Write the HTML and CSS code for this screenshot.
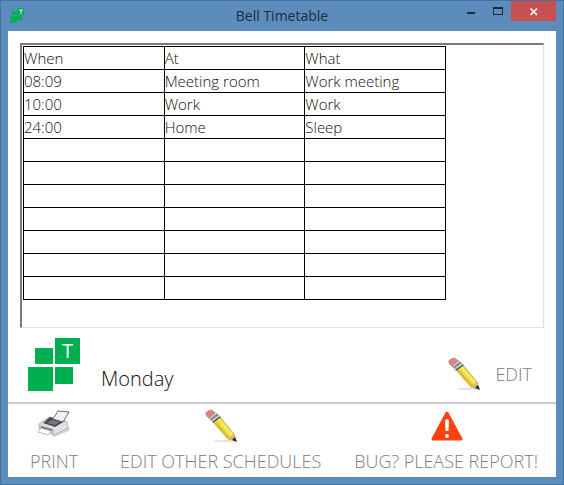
FILE: index.html
```
<!DOCTYPE html>
<html lang="en">
<head>
    <meta charset="UTF-8">
    <meta name="viewport" content="width=device-width, initial-scale=1.0">
    <title>Bell Timetable</title>
    <link rel="stylesheet" href="styles.css">
</head>
<body>
    <!-- Shared icons -->
    <svg class="defs" width="0" height="0" aria-hidden="true">
        <symbol id="pencil" viewBox="0 0 34 34">
            <ellipse cx="20" cy="32" rx="10" ry="1" fill="#e2e2e6"/>
            <path d="M9 13 16 8 30 25 32 32 24 30Z" fill="#f2dc3c" stroke="#b8a244" stroke-width=".8"/>
            <path d="M11 13 25 29" stroke="#d9bd2e" stroke-width="2"/>
            <path d="M14 10 28 26" stroke="#f8ea70" stroke-width="2"/>
            <path d="M24 30 30 25 32 32Z" fill="#d8b27a"/>
            <path d="M28 31 31 28 33 33Z" fill="#33281e"/>
            <path d="M4 8 11 3 17 8 9 14Z" fill="#8a8a8c"/>
            <path d="M6 9 12 4M8 12 15 7" stroke="#e8e8e8" stroke-width="1.4"/>
            <path d="M9 13 16 8" stroke="#555" stroke-width="1.2"/>
            <path d="M2 6Q1 3 4 2L7 1Q9 1 11 4L5 9Q3 8 2 6Z" fill="#dc8578" stroke="#c0766a" stroke-width=".6"/>
        </symbol>
        <symbol id="logo" viewBox="0 0 52 53">
            <path d="M27 0h25v26H27zM7 10h18v16H7zM0 29h25v24H0zM27 29h18v17H27z" fill="#00b050"/>
        </symbol>
    </svg>

    <div class="window">
        <header class="titlebar">
            <span class="app-icon"><svg width="14" height="15" viewBox="0 0 14 15"><use href="#logo" width="14" height="15"/><path d="M9 2h4M11 2v4" stroke="#d5f2e0" stroke-width="1"/></svg></span>
            <h1>Bell Timetable</h1>
            <div class="controls">
                <button type="button" aria-label="Minimize"><svg width="10" height="10"><path d="M1 6h8v2H1z" fill="#1b2b3c"/></svg></button>
                <button type="button" aria-label="Maximize"><svg width="10" height="10"><path d="M0 1h10v8H0zM1 3v5h8V3z" fill="#1b2b3c" fill-rule="evenodd"/></svg></button>
                <button type="button" class="close" aria-label="Close"><svg width="10" height="10"><path d="M1.500 2.500 8 9M8 2.500 1.500 9" stroke="#fff" stroke-width="1.600"/></svg></button>
            </div>
        </header>

        <main class="content">
            <div class="sheet">
                <table>
                    <thead>
                        <tr><th>When</th><th>At</th><th>What</th></tr>
                    </thead>
                    <tbody>
                        <tr><td>08:09</td><td>Meeting room</td><td>Work meeting</td></tr>
                        <tr><td>10:00</td><td>Work</td><td>Work</td></tr>
                        <tr><td>24:00</td><td>Home</td><td>Sleep</td></tr>
                        <tr><td></td><td></td><td></td></tr>
                        <tr><td></td><td></td><td></td></tr>
                        <tr><td></td><td></td><td></td></tr>
                        <tr><td></td><td></td><td></td></tr>
                        <tr><td></td><td></td><td></td></tr>
                        <tr><td></td><td></td><td></td></tr>
                        <tr><td></td><td></td><td></td></tr>
                    </tbody>
                </table>
            </div>

            <div class="day-bar">
                <div class="logo">
                    <svg width="52" height="53"><use href="#logo"/></svg>
                    <span>T</span>
                </div>
                <h2>Monday</h2>
                <button type="button" class="action edit">
                    <svg width="34" height="34"><use href="#pencil"/></svg>
                    <span>EDIT</span>
                </button>
            </div>

            <footer class="toolbar">
                <button type="button" class="action print">
                    <svg width="34" height="34" viewBox="0 0 34 34">
                        <path d="M2 22 15 27 33 18 32 22 17 28Z" fill="#d4d4d6"/>
                        <path d="M2 15 12 8 30 13 31 19 17 26 2 20Z" fill="#e2e2e4" stroke="#a5a5a8" stroke-width=".8"/>
                        <path d="M2 15 17 20 17 26 2 20Z" fill="#c4c4c7"/>
                        <path d="M6 14 13 8 28 12 18 18Z" fill="#4a4b50"/>
                        <path d="M10 14 15 11 23 13 18 16Z" fill="#77797f"/>
                        <path d="M16 10 21 2 32 3 26 13Z" fill="#f2f4fa" stroke="#68696f" stroke-width="1"/>
                        <path d="M20 10 24 4M24 11 29 5" stroke="#dfe3ef" stroke-width="1"/>
                        <path d="M4 19 14 22 11 26 1 23Z" fill="#fff" stroke="#a5a9b5" stroke-width=".8"/>
                        <path d="M4 18 15 21" stroke="#55565b" stroke-width="1.2"/>
                    </svg>
                    <span>PRINT</span>
                </button>
                <button type="button" class="action">
                    <svg width="34" height="34"><use href="#pencil"/></svg>
                    <span>EDIT OTHER SCHEDULES</span>
                </button>
                <button type="button" class="action">
                    <svg width="34" height="34" viewBox="0 0 34 34">
                        <path d="M18 4 32 30H4Z" fill="#fc4310" stroke="#fc4310" stroke-width="3" stroke-linejoin="round"/>
                        <path d="M17 12Q18 10 19 12L18.500 21H17.500Z" fill="#fff" stroke="#fff" stroke-width="2"/>
                        <circle cx="18" cy="27" r="2" fill="#fff"/>
                    </svg>
                    <span>BUG? PLEASE REPORT!</span>
                </button>
            </footer>
        </main>
    </div>
</body>
</html>
```
FILE: styles.css
```
* {
    box-sizing: border-box;
}
body {
    margin: 0;
    font-family: "Open Sans", "Noto Sans", sans-serif;
    font-weight: 300;
    color: #111;
}
button {
    padding: 0;
    border: none;
    background: none;
    font: inherit;
    color: inherit;
    cursor: pointer;
}
svg {
    display: block;
}
.defs {
    position: absolute;
}

/* Window frame */
.window {
    display: flex;
    flex-direction: column;
    min-height: 100vh;
    padding: 0 7px 7px;
    border: 1px solid #4271a3;
    background-color: #5b8cbb;
}
.titlebar {
    display: grid;
    grid-template-columns: 1fr auto 1fr;
    height: 30px;
}
.app-icon {
    padding: 7px 2px;
}
.titlebar h1 {
    margin: 0;
    font-size: 14px;
    font-weight: 400;
    line-height: 30px;
    color: #1b2b3c;
}
.controls {
    display: flex;
    justify-content: flex-end;
    align-items: flex-start;
}
.controls button {
    display: flex;
    justify-content: center;
    align-items: center;
    width: 27px;
    height: 20px;
}
.controls .close {
    width: 45px;
    background-color: #c75050;
}

/* Timetable */
.content {
    display: flex;
    flex: 1;
    flex-direction: column;
    background-color: #fff;
}
.sheet {
    flex: 1;
    margin: 12px 12px 0;
    padding: 1px;
    border: 1px solid #e0e0e0;
    border-top: 2px solid #7a7a7a;
    border-left: 2px solid #7a7a7a;
}
table {
    width: 423px;
    max-width: 100%;
    table-layout: fixed;
    border-collapse: collapse;
}
th,
td {
    height: 23px;
    padding: 0;
    border: 1px solid #000;
    font-size: 15px;
    font-weight: 300;
    line-height: 22px;
    text-align: left;
}

/* Selected day */
.day-bar {
    display: flex;
    align-items: flex-end;
    height: 74px;
    padding: 0 24px 11px 20px;
}
.logo {
    position: relative;
}
.logo span {
    position: absolute;
    top: 0;
    right: 0;
    width: 25px;
    font-size: 20px;
    font-weight: 400;
    line-height: 26px;
    text-align: center;
    color: #fff;
}
.day-bar h2 {
    margin: 0 auto 0 21px;
    font-size: 20px;
    font-weight: 300;
    line-height: 24px;
}
.action {
    display: flex;
    flex-direction: column;
    align-items: center;
    font-size: 18px;
    line-height: 24px;
    color: #808083;
}
.edit {
    flex-direction: row;
    gap: 14px;
}

/* Bottom toolbar */
.toolbar {
    display: flex;
    justify-content: space-between;
    height: 75px;
    padding: 5px 18px 0 13px;
    border-top: 2px solid #ccc;
}
.toolbar .action {
    gap: 6px;
    height: 64px;
    white-space: nowrap;
}
.print {
    padding: 0 9px;
}
```
